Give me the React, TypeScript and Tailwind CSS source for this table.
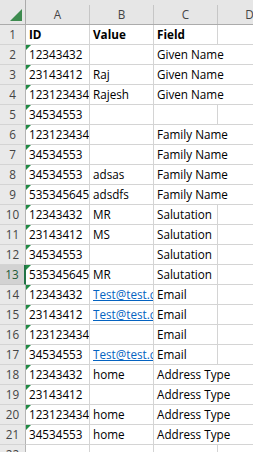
import React from 'react';

type Row = { id: string; value: string; field: string; link?: boolean };

const rows: Row[] = [
  { id: '12343432', value: '', field: 'Given Name' },
  { id: '23143412', value: 'Raj', field: 'Given Name' },
  { id: '123123434', value: 'Rajesh', field: 'Given Name' },
  { id: '34534553', value: '', field: '' },
  { id: '123123434', value: '', field: 'Family Name' },
  { id: '34534553', value: '', field: 'Family Name' },
  { id: '34534553', value: 'adsas', field: 'Family Name' },
  { id: '535345645', value: 'adsdfs', field: 'Family Name' },
  { id: '12343432', value: 'MR', field: 'Salutation' },
  { id: '23143412', value: 'MS', field: 'Salutation' },
  { id: '34534553', value: '', field: 'Salutation' },
  { id: '535345645', value: 'MR', field: 'Salutation' },
  { id: '12343432', value: 'Test@test.com', field: 'Email', link: true },
  { id: '23143412', value: 'Test@test.com', field: 'Email', link: true },
  { id: '123123434', value: '', field: 'Email' },
  { id: '34534553', value: 'Test@test.com', field: 'Email', link: true },
  { id: '12343432', value: 'home', field: 'Address Type' },
  { id: '23143412', value: '', field: 'Address Type' },
  { id: '123123434', value: 'home', field: 'Address Type' },
  { id: '34534553', value: 'home', field: 'Address Type' },
];

// text in C that spills over into the empty D column
const spills = new Set(['Given Name', 'Family Name', 'Address Type']);

const SELECTED_ROW = 13;

function RowHeader({ n }: { n: number }) {
  const selected = n === SELECTED_ROW;
  return (
    <div
      className={
        selected
          ? 'flex w-[26px] shrink-0 items-center justify-center border-r-2 border-b border-r-[#217346] border-b-[#c8c8c8] bg-[#d2d2d2] leading-[19px] text-[#1d5a36]'
          : 'flex w-[26px] shrink-0 items-center justify-center border-r border-b border-r-[#b4b4b4] border-b-[#d4d4d4] bg-[#e9e9e9] leading-[19px] text-[#444]'
      }
    >
      {n}
    </div>
  );
}

export default function App() {
  return (
    <div className="h-[452px] w-[253px] overflow-hidden bg-white font-['Open_Sans','Liberation_Sans',sans-serif] text-[11.7px] text-black">
      {/* column headers */}
      <div className="flex h-[25px] border-b border-[#ababab] bg-[#e6e6e6] text-[#444]">
        <div className="flex w-[26px] shrink-0 items-start border-r border-[#ababab]">
          <svg width="25" height="24" viewBox="0 0 25 24" className="block">
            <polygon points="22,9 22,21 10,21" fill="#3d8b4f" />
          </svg>
        </div>
        {['A', 'B', 'C', 'D'].map((c) => (
          <div
            key={c}
            className="mt-[5px] flex w-[64px] shrink-0 items-center justify-center border-r border-[#c6c6c6] leading-[19px]"
          >
            {c}
          </div>
        ))}
      </div>

      {/* row 1 */}
      <div className="flex h-[20px]">
        <RowHeader n={1} />
        {['ID', 'Value', 'Field'].map((t) => (
          <div
            key={t}
            className="w-[64px] shrink-0 overflow-hidden whitespace-nowrap border-r border-b border-[#d4d4d4] pl-[3px] font-bold leading-[19px]"
          >
            {t}
          </div>
        ))}
        <div className="w-[64px] shrink-0 border-r border-b border-[#d4d4d4]" />
      </div>

      {rows.map((r, i) => {
        const n = i + 2;
        const spill = spills.has(r.field);
        return (
          <div key={n} className="flex h-[20px]">
            <RowHeader n={n} />
            <div className="relative w-[64px] shrink-0 overflow-hidden whitespace-nowrap border-r border-b border-[#d4d4d4] pl-[3px] leading-[19px]">
              <span className="absolute left-0 top-0 h-0 w-0 border-t-[5px] border-r-[5px] border-t-[#1f8a43] border-r-transparent" />
              {r.id}
            </div>
            <div className="w-[64px] shrink-0 overflow-hidden whitespace-nowrap border-r border-b border-[#d4d4d4] pl-[3px] leading-[19px]">
              {r.link ? (
                <span className="block overflow-hidden text-[#0563c1] underline">{r.value}</span>
              ) : (
                r.value
              )}
            </div>
            <div
              className={
                spill
                  ? 'relative z-10 w-[64px] shrink-0 whitespace-nowrap border-b border-[#d4d4d4] pl-[3px] leading-[19px]'
                  : 'w-[64px] shrink-0 overflow-hidden whitespace-nowrap border-r border-b border-[#d4d4d4] pl-[3px] leading-[19px]'
              }
            >
              {r.field}
            </div>
            <div className="w-[64px] shrink-0 border-r border-b border-[#d4d4d4]" />
          </div>
        );
      })}

      {/* row 22, cut off by the window */}
      <div className="flex h-[20px]">
        <RowHeader n={22} />
        <div className="w-[64px] shrink-0 border-r border-b border-[#d4d4d4]" />
        <div className="w-[64px] shrink-0 border-r border-b border-[#d4d4d4]" />
        <div className="w-[64px] shrink-0 border-r border-b border-[#d4d4d4]" />
        <div className="w-[64px] shrink-0 border-r border-b border-[#d4d4d4]" />
      </div>
    </div>
  );
}
